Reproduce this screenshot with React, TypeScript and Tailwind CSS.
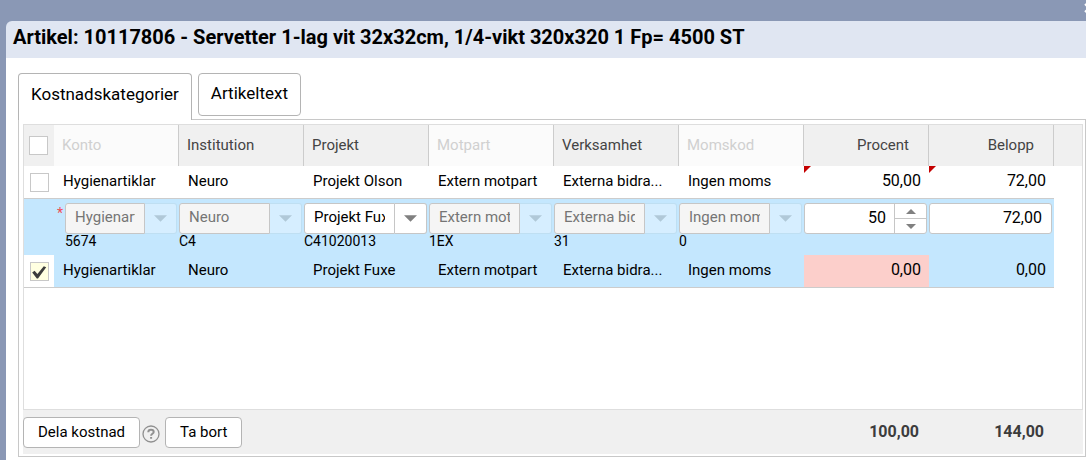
import type { ReactNode } from 'react';

type Row = { id: string; cells: string[]; percent: string; amount: string; selected: boolean };

const columns = [
  { label: 'Konto', disabled: true },
  { label: 'Institution', disabled: false },
  { label: 'Projekt', disabled: false },
  { label: 'Motpart', disabled: true },
  { label: 'Verksamhet', disabled: false },
  { label: 'Momskod', disabled: true },
];

const rows: Row[] = [
  {
    id: 'olson',
    cells: ['Hygienartiklar', 'Neuro', 'Projekt Olson', 'Extern motpart', 'Externa bidra...', 'Ingen moms'],
    percent: '50,00',
    amount: '72,00',
    selected: false,
  },
  {
    id: 'fuxe',
    cells: ['Hygienartiklar', 'Neuro', 'Projekt Fuxe', 'Extern motpart', 'Externa bidra...', 'Ingen moms'],
    percent: '0,00',
    amount: '0,00',
    selected: true,
  },
];

const editors = [
  { label: 'Konto', value: 'Hygienartiklar', code: '5674', disabled: true, required: true },
  { label: 'Institution', value: 'Neuro', code: 'C4', disabled: true },
  { label: 'Projekt', value: 'Projekt Fuxe', code: 'C41020013', disabled: false },
  { label: 'Motpart', value: 'Extern motpart', code: '1EX', disabled: true },
  { label: 'Verksamhet', value: 'Externa bidrag', code: '31', disabled: true },
  { label: 'Momskod', value: 'Ingen moms', code: '0', disabled: true },
];

function Triangle({ up = false, small = false }: { up?: boolean; small?: boolean }) {
  return (
    <svg viewBox="0 0 14 7" className={small ? 'h-[5px] w-[10px]' : 'h-[7px] w-[13px]'} fill="currentColor" aria-hidden="true">
      <path d={up ? 'M0 7 7 0l7 7z' : 'M0 0h14L7 7z'} />
    </svg>
  );
}

function Check({ label, checked = false }: { label: string; checked?: boolean }) {
  return (
    <span className="relative block size-[19px]">
      <input
        type="checkbox"
        aria-label={label}
        defaultChecked={checked}
        className="peer block size-[19px] appearance-none border border-[#c8c8c8] bg-white checked:bg-[#ffffe1]"
      />
      <svg
        viewBox="0 0 19 19"
        className="pointer-events-none absolute inset-0 hidden size-[19px] peer-checked:block"
        fill="#3c3c3c"
        aria-hidden="true"
      >
        <path d="M2.2 10.6 4.6 8.8 7.4 12 13.8 4.2 16.2 5.2 8 16.4 6.8 16.4z" />
      </svg>
    </span>
  );
}

function Combo({ label, value, code, disabled, required }: (typeof editors)[number]) {
  return (
    <div className={required ? 'relative pl-[11px]' : ''}>
      {required && <span className="absolute top-0.5 left-[3px] text-sm leading-4 text-[#ef4d55]">*</span>}
      <div className="flex h-[31px] w-full">
        <input
          aria-label={label}
          defaultValue={value}
          disabled={disabled}
          className="min-w-0 flex-1 rounded-l-[3px] border border-[#c6c6c6] bg-white px-[9px] pb-0.5 text-[15px] text-black disabled:bg-[#f5f5f5] disabled:text-[#757575]"
        />
        <button
          type="button"
          aria-label={`Välj ${label}`}
          disabled={disabled}
          className="flex w-8 items-center justify-center rounded-r-[3px] border border-l-0 border-[#c6c6c6] bg-white text-[#808080] disabled:border-[#bfdff2] disabled:bg-[#d6eeff] disabled:text-[#b0c8d8]"
        >
          <Triangle />
        </button>
      </div>
      <div className="text-sm leading-[14px] text-black">{code}</div>
    </div>
  );
}

function NumberCell({ children, flagged, warn }: { children: ReactNode; flagged: boolean; warn?: boolean }) {
  return (
    <td className={`relative pr-2 pb-0.5 text-right text-base ${warn ? 'bg-[#fccfcb]' : ''}`}>
      {flagged && (
        <svg viewBox="0 0 7 7" className="absolute top-0 left-0 size-[7px]" fill="#c40000" aria-hidden="true">
          <path d="M0 0h7L0 7z" />
        </svg>
      )}
      {children}
    </td>
  );
}

function DataRow({ row }: { row: Row }) {
  const line = '[&>td]:border-b [&>td]:border-[#ccc]';
  return (
    <tr className={`h-[33px] ${line} ${row.selected ? 'bg-[#c4e7fe]' : ''}`}>
      <td className="bg-white pl-1.5">
        <Check label={`Markera ${row.cells[2]}`} checked={row.selected} />
      </td>
      {row.cells.map((cell, i) => (
        <td key={i} className="truncate pb-0.5 pl-[9px]">{cell}</td>
      ))}
      <NumberCell flagged={!row.selected} warn={row.selected}>{row.percent}</NumberCell>
      <NumberCell flagged={!row.selected}>{row.amount}</NumberCell>
      <td className="border-0! bg-white" />
    </tr>
  );
}

function EditRow() {
  return (
    <tr className="h-14 bg-[#c4e7fe]">
      <td />
      {editors.map((e) => (
        <td key={e.label} className="pt-1 pr-0.5 align-top">
          <Combo {...e} />
        </td>
      ))}
      <td className="pt-1 pr-0.5 align-top">
        <div className="flex h-[31px] overflow-hidden rounded-[3px] border border-[#c6c6c6] bg-white">
          <input aria-label="Procent" defaultValue="50" className="min-w-0 flex-1 pr-2 pb-0.5 text-right text-base" />
          <div className="flex w-8 flex-col border-l border-[#c6c6c6] text-[#808080]">
            <button type="button" aria-label="Öka" className="flex flex-1 items-center justify-center border-b border-[#c6c6c6]">
              <Triangle up small />
            </button>
            <button type="button" aria-label="Minska" className="flex flex-1 items-center justify-center">
              <Triangle small />
            </button>
          </div>
        </div>
      </td>
      <td className="pt-1 pr-0.5 align-top">
        <input
          aria-label="Belopp"
          defaultValue="72,00"
          className="block h-[31px] w-full rounded-[3px] border border-[#c6c6c6] bg-white pr-[9px] pb-0.5 text-right text-base"
        />
      </td>
      <td className="bg-white" />
    </tr>
  );
}

export default function App() {
  const button = 'h-[31px] rounded-[4px] border border-[#b4b4b4] bg-white text-[15px] text-black';
  return (
    <div className="relative flex min-h-screen flex-col overflow-hidden bg-[#8a98b5] pt-[21px] pl-1.5 font-['Roboto','Liberation_Sans',sans-serif] text-[15px] text-black">
      <button type="button" aria-label="Stäng" className="absolute top-[3px] -right-2 text-white">
        <svg viewBox="0 0 10 10" className="size-[10px]" fill="none" stroke="currentColor" strokeWidth="2" aria-hidden="true">
          <path d="m1 1 8 8M9 1 1 9" />
        </svg>
      </button>
      <header className="h-[37px] rounded-tl-[6px] bg-[#e0e6f2] px-[7px]">
        <h1 className="text-xl leading-8 font-bold whitespace-nowrap">
          Artikel: 10117806 - Servetter 1-lag vit 32x32cm, 1/4-vikt 320x320 1 Fp= 4500 ST
        </h1>
      </header>

      <main className="flex flex-1 flex-col bg-white pt-[15px] pb-[3px] pl-3">
        <div role="tablist" className="relative z-10 -mb-px flex items-start gap-1.5 text-[17px]">
          <button type="button" role="tab" aria-selected="true" className="h-[47px] rounded-t-[4px] border border-b-0 border-[#b4b4b4] bg-white px-3 pb-1">
            Kostnadskategorier
          </button>
          <button type="button" role="tab" aria-selected="false" className="h-[43px] rounded-[4px] border border-[#b4b4b4] bg-white px-3 pb-0.5">
            Artikeltext
          </button>
        </div>

        <section role="tabpanel" className="flex flex-1 flex-col border border-[#c8c8c8] pt-1 pr-0.5 pb-0.5 pl-1">
          <div className="flex-1 border border-[#dedede] bg-white">
            <table className="w-full table-fixed border-separate border-spacing-0">
              <colgroup>
                <col className="w-[30px]" />
                {[...columns, 'percent', 'amount'].map((_, i) => (
                  <col key={i} className="w-[125px]" />
                ))}
                <col />
              </colgroup>
              <thead>
                <tr className="h-[41px] bg-[#f0f0f0] text-left text-[#444]">
                  <th className="pl-[5px]">
                    <Check label="Markera alla" />
                  </th>
                  {columns.map((c) => (
                    <th
                      key={c.label}
                      className={`border-r border-[#ccc] pl-2 font-normal ${c.disabled ? 'bg-[#fbfbfb] text-[#d0d0d0]' : ''}`}
                    >
                      {c.label}
                    </th>
                  ))}
                  <th className="border-r border-[#ccc] pr-[19px] text-right font-normal">Procent</th>
                  <th className="border-r border-[#ccc] pr-[19px] text-right font-normal">Belopp</th>
                  <td />
                </tr>
              </thead>
              <tbody>
                <DataRow row={rows[0]} />
                <EditRow />
                <DataRow row={rows[1]} />
              </tbody>
            </table>
          </div>

          <footer className="flex h-[44px] items-center bg-[#f0f0f0]">
            <div className="flex w-[771px] items-center">
              <button type="button" className={`${button} px-3.5`}>Dela kostnad</button>
              <button type="button" aria-label="Hjälp" className="mt-1 ml-0.5 text-[#909090]">
                <svg viewBox="0 0 18 18" className="size-[18px]" fill="none" stroke="currentColor" strokeWidth="1.3" aria-hidden="true">
                  <circle cx="9" cy="9" r="8" />
                  <path strokeWidth="2" d="M6.3 7.2C6.3 5.6 7.4 4.8 9 4.8s2.7.8 2.7 2.2c0 1.8-2.6 1.8-2.6 3.7M9.1 11.9v1.9" />
                </svg>
              </button>
              <button type="button" className={`${button} ml-[5px] px-3.5`}>Ta bort</button>
            </div>
            <div className="w-[125px] text-right text-base font-bold text-[#3c3c3c]">100,00</div>
            <div className="w-[125px] text-right text-base font-bold text-[#3c3c3c]">144,00</div>
          </footer>
        </section>
      </main>
    </div>
  );
}
